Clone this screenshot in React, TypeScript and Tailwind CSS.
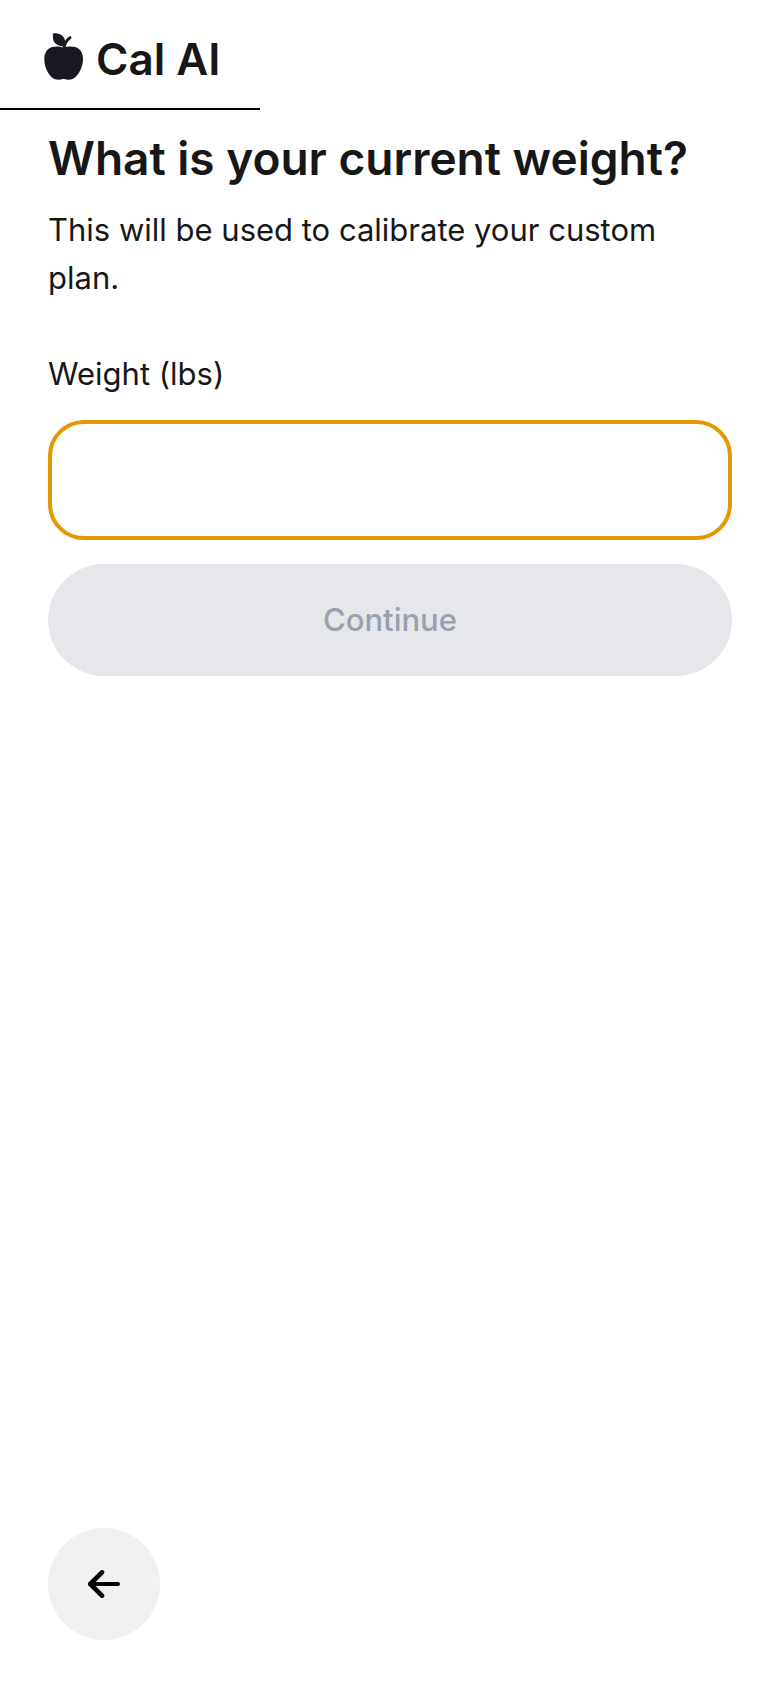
import React, { useState } from 'react';

const AppleLogo: React.FC = () => (
  <svg viewBox="0 0 40 48" className="h-12 w-10" fill="#1b1822" aria-hidden="true">
    <path d="M19.5 14.800C16.500 13.400 12 12.900 8 14C3 15.600 .3 20 .3 26C.3 33.500 3.500 40.500 8 44.500C11.500 47.300 15.500 47 19.500 45.800C23.500 47 27.500 47.300 31 44.500C35.500 40.500 39 33.500 39 26C39 20 36.300 15.600 31.300 14C27.300 12.900 22.500 13.400 19.500 14.800Z" />
    <path d="M8.800 .4C14.500 -.2 19 2 20.500 5.800C21.500 8.500 21.200 11 20.200 13.200C15.500 13.300 11.500 11.500 9.800 8.200C8.600 6 9 2.800 8.800 .4Z" />
    <path d="M20 15.500C20.300 10.500 22.500 7.300 26 4.600" fill="none" stroke="#1b1822" strokeWidth="3" strokeLinecap="round" />
  </svg>
);

const BackArrow: React.FC = () => (
  <svg
    viewBox="0 0 32 28"
    className="h-7 w-8"
    fill="none"
    stroke="black"
    strokeLinecap="round"
    strokeLinejoin="round"
    aria-hidden="true"
  >
    <path d="M14 2.300L2.300 14L14 25.700" strokeWidth="4.600" />
    <path d="M2 14H30" strokeWidth="4" />
  </svg>
);

const App: React.FC = () => {
  const [weight, setWeight] = useState('');

  return (
    <div className="flex min-h-screen flex-col bg-white font-['Inter',sans-serif] text-[#171717]">
      <header>
        <div className="flex h-27 items-center gap-3 px-11 pt-1.5">
          <AppleLogo />
          <span className="pt-1 text-[44px] leading-14 font-semibold">Cal AI</span>
        </div>
        <div className="h-[2px] w-1/3 bg-black" />
      </header>

      <main className="flex flex-1 flex-col px-12 pt-5">
        <h1 className="text-[46px] leading-14 font-semibold">What is your current weight?</h1>
        <p className="mt-5 text-[31px] leading-12">
          This will be used to calibrate your custom plan.
        </p>

        <form className="mt-12 flex flex-col" onSubmit={(e) => e.preventDefault()}>
          <label htmlFor="weight" className="text-[31px] leading-12">
            Weight (lbs)
          </label>
          <input
            id="weight"
            type="text"
            inputMode="decimal"
            value={weight}
            onChange={(e) => setWeight(e.target.value)}
            className="mt-[22px] h-30 w-full rounded-[36px] border-4 border-[#e59700] px-8 text-[31px] outline-none"
          />
          <button
            type="submit"
            disabled={!weight}
            className="mt-6 h-28 w-full rounded-full bg-black text-[31px] font-medium text-white disabled:bg-[#e5e7eb] disabled:text-[#99a1af]"
          >
            Continue
          </button>
        </form>
      </main>

      <footer className="px-12 pb-12">
        <button
          type="button"
          aria-label="Back"
          className="flex size-28 items-center justify-center rounded-full bg-[#f1f1f1]"
        >
          <BackArrow />
        </button>
      </footer>
    </div>
  );
};

export default App;
